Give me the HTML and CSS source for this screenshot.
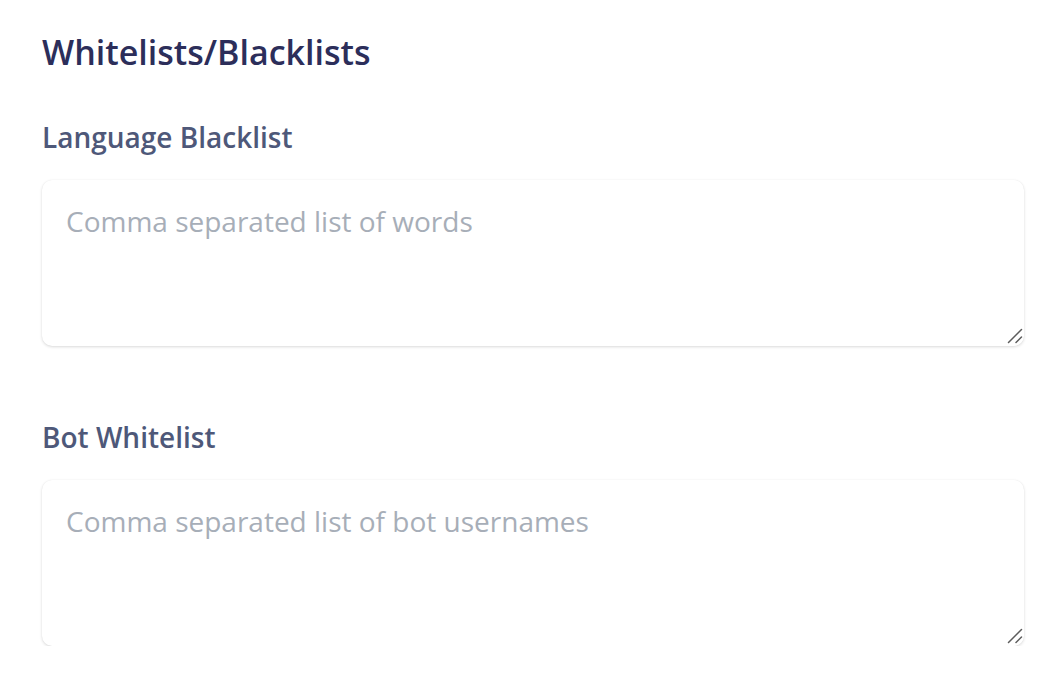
FILE: index.html
```html
<!DOCTYPE html>
<html lang="en">
<head>
<meta charset="utf-8">
<link rel="stylesheet" href="styles.css">
</head>
<body>
<section class="panel">
  <h2 class="title">Whitelists/Blacklists</h2>
  <div class="field">
    <label class="label" for="lang">Language Blacklist</label>
    <div class="input-wrap">
      <textarea id="lang" class="input" placeholder="Comma separated list of words"></textarea>
      <svg class="grip" width="16" height="16" viewBox="0 0 16 16" aria-hidden="true">
        <line x1="1.5" y1="14.5" x2="14.5" y2="1.5"/>
        <line x1="9" y1="14.5" x2="14.5" y2="9"/>
      </svg>
    </div>
  </div>
  <div class="field">
    <label class="label" for="bot">Bot Whitelist</label>
    <div class="input-wrap">
      <textarea id="bot" class="input" placeholder="Comma separated list of bot usernames"></textarea>
      <svg class="grip" width="16" height="16" viewBox="0 0 16 16" aria-hidden="true">
        <line x1="1.5" y1="14.5" x2="14.5" y2="1.5"/>
        <line x1="9" y1="14.5" x2="14.5" y2="9"/>
      </svg>
    </div>
  </div>
</section>
</body>
</html>
```
FILE: styles.css
```css
html, body {
  margin: 0;
  padding: 0;
  background: #ffffff;
}
body {
  font-family: "Open Sans", "Noto Sans", sans-serif;
}
.panel {
  padding: 28px 32px 0 42px;
  display: flex;
  flex-direction: column;
}
.title {
  margin: 0;
  font-size: 34px;
  font-weight: 600;
  color: #2c2e5a;
  line-height: 48px;
}
.field {
  display: flex;
  flex-direction: column;
  margin-top: 41px;
}
.field + .field {
  margin-top: 71px;
}
.label {
  font-size: 28px;
  font-weight: 600;
  color: #4e5879;
  line-height: 40px;
}
.input-wrap {
  position: relative;
  margin-top: 23px;
  display: flex;
}
.input {
  flex: 1;
  height: 166px;
  box-sizing: border-box;
  border: none;
  border-radius: 10px;
  box-shadow: 0 1px 3px rgba(0,0,0,0.15), 0 0 1px rgba(0,0,0,0.06);
  padding: 21px 24px;
  font-family: "Open Sans", "Noto Sans", sans-serif;
  font-size: 28px;
  line-height: 40px;
  color: #333;
  background: #fff;
  resize: none;
  outline: none;
}
.input::placeholder {
  color: #a7aeb8;
}
.grip {
  position: absolute;
  right: 1px;
  bottom: 2px;
  pointer-events: none;
  stroke: #5c5c5c;
  stroke-width: 1.5;
  stroke-linecap: round;
}
```
